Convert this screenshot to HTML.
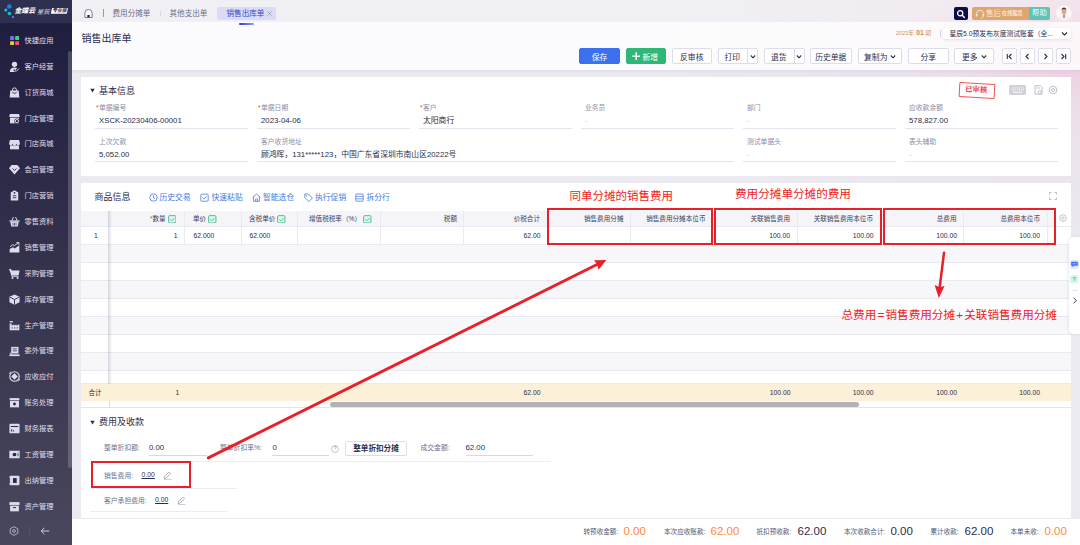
<!DOCTYPE html>
<html lang="zh-CN">
<head>
<meta charset="utf-8">
<title>销售出库单</title>
<style>
*{box-sizing:border-box;margin:0;padding:0}
html,body{width:1080px;height:545px;overflow:hidden}
body{position:relative;font-family:"Liberation Sans","Noto Sans CJK SC",sans-serif;color:#2b2c4a;background:radial-gradient(ellipse 420px 200px at 1088px 48px,rgba(238,203,222,1) 0%,rgba(238,204,222,.95) 6%,rgba(238,207,224,.5) 28%,rgba(238,210,226,.3) 45%,rgba(237,212,227,.08) 88%,rgba(236,214,228,0) 100%),#eaeaf0;font-size:8px}
.a{position:absolute}
.t{position:absolute;white-space:nowrap;line-height:1}
/* sidebar */
#side{left:0;top:0;width:72px;height:545px;background:linear-gradient(180deg,#1f1e3f 4%,#37354f 55%,#48475d 100%)}
#side .logo{left:0;top:0;width:72px;height:22.500px;background:#2f3050}
#side .sb{display:none}
#side .sbt{left:67.700px;top:51px;width:4.300px;height:416.500px;background:rgba(255,255,255,.19);border-radius:2px}
.mi{position:absolute;left:24.400px;font-size:7.250px;color:#e0dfec;white-space:nowrap;line-height:1}
.ic{position:absolute;left:8.800px;width:11px;height:11px;margin-top:-.5px}
/* header */
#tabs{left:72px;top:0;width:1008px;height:22px;background:rgba(255,255,255,.3)}
#head{left:72px;top:22px;width:1008px;height:48px;background:rgba(255,255,255,.82)}
#headsh{left:72px;top:70px;width:1008px;height:4px;background:linear-gradient(180deg,rgba(150,150,175,.13),rgba(150,150,175,0))}
.tab{font-size:7.6px;color:#6d6e86}
.btn{position:absolute;top:48px;height:16px;border:1px solid #dcdcea;border-radius:2px;background:#fff;font-size:7.8px;color:#2b2c4a;text-align:center;line-height:17.600px;white-space:nowrap;overflow:hidden}
/* panels */
.panel{position:absolute;background:#fff}
.lbl{position:absolute;font-size:6.8px;color:#8c8ea3;white-space:nowrap;line-height:1}
.val{position:absolute;font-size:7.8px;color:#2b2c4a;white-space:nowrap;line-height:1}
.ul{position:absolute;height:1px;background:#e5e5ef}

.th{position:absolute;font-size:6.6px;color:#3d3e58;white-space:nowrap;line-height:1;text-align:right}
.td{position:absolute;font-size:6.8px;color:#2b2c4a;white-space:nowrap;line-height:1;text-align:right}
.red{color:#ee1c25}
.req{color:#f0483e}
.rbox{position:absolute;border:2px solid #e8202a}
.lnk{position:absolute;font-size:7.8px;color:#4a78e0;white-space:nowrap;line-height:1}
.fl{position:absolute;font-size:6.8px;color:#6e7088;white-space:nowrap;line-height:1}
.big{position:absolute;font-size:11.5px;white-space:nowrap;line-height:1}
.or{color:#ff8a3c}
</style>
</head>
<body>
<!-- SIDEBAR -->
<div id="side" class="a">
  <div class="a logo"></div>
  <div class="a sb"></div>
  <div class="a sbt"></div>
  <svg class="a" style="left:0;top:0" width="72" height="22" viewBox="0 0 72 22"><circle cx="9.3" cy="6.5" r="2.3" fill="#1a7df5"/><circle cx="5.8" cy="10" r="1.5" fill="#10c8f0"/><circle cx="9.4" cy="13.5" r="1.8" fill="#12c4b8"/><rect x="11.9" y="16.1" width="2" height="2" fill="#9a5cf0"/><path d="M52 8.100h16l-1.200 5.600h-16z" fill="#fff"/></svg>
  <div class="t" style="left:14.400px;top:8.300px;font-size:6.900px;font-weight:bold;font-style:italic;color:#fff;letter-spacing:0">金蝶云</div>
  <div class="t" style="left:37px;top:8.500px;font-size:6.300px;font-style:italic;color:#d8d8e6">星辰</div>
  <div class="t" style="left:52.200px;top:8.600px;font-size:4.800px;font-weight:bold;font-style:italic;color:#2d2b4b">专业版</div>
  <svg class="ic" style="top:35.6px" viewBox="0 0 10 10"><rect x="1" y="1" width="3.6" height="3.6" rx=".8" fill="#7a6cf0"/><rect x="5.6" y="1" width="3.6" height="3.6" rx=".8" fill="#3fd08a"/><rect x="1" y="5.6" width="3.6" height="3.6" rx=".8" fill="#f8c63c"/><rect x="5.6" y="5.6" width="3.6" height="3.6" rx=".8" fill="#f2546a"/></svg><div class="mi" style="top:36.9px">快捷应用</div>
  <svg class="ic" style="top:61.5px" viewBox="0 0 10 10"><circle cx="5" cy="3" r="2.4" fill="#dddcec"/><path d="M.8 9.6c0-2.6 1.8-3.8 4.2-3.8 1 0 1.8.2 2.5.6L5.6 8.3l-1-.9-.8.8 1.8 1.7H.8z" fill="#dddcec"/><path d="M5.5 8.6l1 .9 2.6-2.6" stroke="#dddcec" stroke-width=".9" fill="none"/></svg><div class="mi" style="top:62.8px">客户经营</div>
  <svg class="ic" style="top:87.3px" viewBox="0 0 10 10"><path d="M1.2 3.2h7.6l.6 6.3H.6z" fill="#dddcec"/><path d="M3.2 4.6V2.6a1.8 1.8 0 013.6 0v2" stroke="#dddcec" stroke-width=".9" fill="none"/><path d="M3.2 4.4a1.8 1.4 0 003.6 0" stroke="#2a2846" stroke-width=".7" fill="none"/></svg><div class="mi" style="top:88.6px">订货商城</div>
  <svg class="ic" style="top:113.2px" viewBox="0 0 10 10"><path d="M.8 1h8.4l.6 2.6H.2z" fill="#dddcec"/><path d="M.9 4.2h8.2v5.2H.9z" fill="#dddcec"/><circle cx="7.2" cy="7.4" r="2.3" fill="#2a2846"/><circle cx="7.2" cy="7.4" r="1.5" fill="none" stroke="#dddcec" stroke-width=".9"/></svg><div class="mi" style="top:114.5px">门店管理</div>
  <svg class="ic" style="top:139.1px" viewBox="0 0 10 10"><path d="M.8 1h8.4l.7 3a1.6 1.6 0 01-3.2.2 1.7 1.7 0 01-3.4 0A1.6 1.6 0 01.1 4z" fill="#dddcec"/><path d="M.9 5.8h8.2v3.6H.9z" fill="#dddcec"/></svg><div class="mi" style="top:140.4px">门店商城</div>
  <svg class="ic" style="top:164.9px" viewBox="0 0 10 10"><path d="M2.4 1h5.2L10 3.8 5 9.6 0 3.8z" fill="#dddcec"/><path d="M3.2 4l1.8 2 1.8-2" stroke="#2a2846" stroke-width=".8" fill="none"/></svg><div class="mi" style="top:166.3px">会员管理</div>
  <svg class="ic" style="top:190.8px" viewBox="0 0 10 10"><path d="M1.6 2.2L5 .2l3.4 2v7.4H1.6z" fill="#dddcec"/><circle cx="5" cy="2.6" r=".8" fill="#2a2846"/><path d="M3.4 5.2h3.2M3.4 7h3.2" stroke="#2a2846" stroke-width=".8"/></svg><div class="mi" style="top:192.1px">门店营销</div>
  <svg class="ic" style="top:216.7px" viewBox="0 0 10 10"><path d="M.4 4h9.2v1.2H.4z" fill="#dddcec"/><path d="M1.2 5.2h7.6l-.8 4.4H2z" fill="#dddcec"/><path d="M2.6 4.2L4 1M7.4 4.2L6 1" stroke="#dddcec" stroke-width=".9"/><path d="M3.6 6.2v2.4M5 6.2v2.4M6.4 6.2v2.4" stroke="#2a2846" stroke-width=".6"/></svg><div class="mi" style="top:218.0px">零售资料</div>
  <svg class="ic" style="top:242.6px" viewBox="0 0 10 10"><path d="M.6 9.6V6.4l3-1.6 1.6 1L9.4 3v6.6z" fill="#dddcec"/><path d="M1 4.2l2.6-1.8 1.4.9L8.6.6" stroke="#dddcec" stroke-width=".9" fill="none"/><path d="M6.8.4h2.2v2.2" stroke="#dddcec" stroke-width=".9" fill="none"/></svg><div class="mi" style="top:243.9px">销售管理</div>
  <svg class="ic" style="top:268.4px" viewBox="0 0 10 10"><path d="M0 .8h1.6l.5 1.4h7.5l-.9 4.6H2.3z" fill="#dddcec"/><path d="M1.6 1l1 6.6h6" stroke="#dddcec" stroke-width=".8" fill="none"/><circle cx="3.2" cy="9" r=".9" fill="#dddcec"/><circle cx="7.8" cy="9" r=".9" fill="#dddcec"/></svg><div class="mi" style="top:269.7px">采购管理</div>
  <svg class="ic" style="top:294.3px" viewBox="0 0 10 10"><path d="M5 .4l4.6 2.2v4.8L5 9.8.4 7.4V2.6z" fill="#dddcec"/><path d="M.8 2.9L5 5l4.2-2.1M5 5v4.4" stroke="#2a2846" stroke-width=".8" fill="none"/></svg><div class="mi" style="top:295.6px">库存管理</div>
  <svg class="ic" style="top:320.2px" viewBox="0 0 10 10"><path d="M.6 9.4V3.2h1.8v2l2.2-1.4v1.4l2.2-1.4v1.4L9.4 3.8v5.6z" fill="#dddcec"/><path d="M.6 1h3v1.2h-3z" fill="#dddcec"/><path d="M2.2 7.2h1.2M4.6 7.2h1.2M7 7.2h1.2" stroke="#2a2846" stroke-width=".8"/></svg><div class="mi" style="top:321.5px">生产管理</div>
  <svg class="ic" style="top:346.0px" viewBox="0 0 10 10"><path d="M2 .8h6.6v6H2z" fill="#dddcec"/><path d="M3.4 2.6h3.8M3.4 4.4h3.8" stroke="#2a2846" stroke-width=".7"/><path d="M.4 7.6h9.2v1.6H.4z" fill="#dddcec"/><path d="M1 6.2l1.4 1.4" stroke="#dddcec" stroke-width="1"/></svg><div class="mi" style="top:347.3px">委外管理</div>
  <svg class="ic" style="top:371.9px" viewBox="0 0 10 10"><circle cx="5" cy="5" r="4.3" fill="none" stroke="#dddcec" stroke-width="1"/><path d="M5 2l3 3-3 3-3-3z" fill="#dddcec"/><path d="M0 2.6L1.8.6M10 7.4L8.2 9.4" stroke="#dddcec" stroke-width=".9"/></svg><div class="mi" style="top:373.2px">应收应付</div>
  <svg class="ic" style="top:397.8px" viewBox="0 0 10 10"><path d="M.6 1h8.8v2H.6z" fill="#dddcec"/><path d="M.9 3.6h8.2v5.8H.9z" fill="#dddcec"/><circle cx="5" cy="6.4" r="1.3" fill="#2a2846"/></svg><div class="mi" style="top:399.1px">账务处理</div>
  <svg class="ic" style="top:423.7px" viewBox="0 0 10 10"><path d="M1.2.6h7.6a.8.8 0 01.8.8v7.2a.8.8 0 01-.8.8H1.2a.8.8 0 01-.8-.8V1.400a.8.8 0 01.8-.8z" fill="#dddcec"/><path d="M1.6 3.200h6.800" stroke="#2a2846" stroke-width=".9"/><path d="M2.4 7.8V5.600M4 7.8V6.400" stroke="#2a2846" stroke-width=".8"/></svg><div class="mi" style="top:425.0px">财务报表</div>
  <svg class="ic" style="top:449.5px" viewBox="0 0 10 10"><path d="M.3 1.6h9.4v6.8H.3z" fill="#dddcec"/><circle cx="5" cy="5" r="1.7" fill="#2a2846"/><path d="M8.2 3.400v3.2" stroke="#2a2846" stroke-width=".7"/></svg><div class="mi" style="top:450.8px">工资管理</div>
  <svg class="ic" style="top:475.4px" viewBox="0 0 10 10"><path d="M1.4.6h7.200a.9.9 0 01.9.9v7a.9.9 0 01-.9.9H1.4a.9.9 0 01-.9-.9v-7a.9.9 0 01.9-.9z" fill="#dddcec"/><path d="M3.600 2.800h3.400v4.400H3.600z" fill="#2a2846"/><path d="M.5 2.600v4.800" stroke="#2a2846" stroke-width="1.400"/><path d="M1.2 1.800v6.400" stroke="#dddcec" stroke-width="1"/></svg><div class="mi" style="top:476.7px">出纳管理</div>
  <svg class="ic" style="top:501.3px" viewBox="0 0 10 10"><path d="M.4 1h9.200v2.600H.4z" fill="#dddcec"/><path d="M1 4.200h8v5.200H1z" fill="#dddcec"/><path d="M3.600 6h2.800" stroke="#2a2846" stroke-width=".9"/></svg><div class="mi" style="top:502.6px">资产管理</div>
  <svg class="a" style="left:8.500px;top:526px" width="10" height="10" viewBox="0 0 10 10"><path d="M5 .6l3.800 2.200v4.400L5 9.400 1.200 7.200V2.800z" fill="none" stroke="#b9b8cc" stroke-width=".9"/><circle cx="5" cy="5" r="1.400" fill="none" stroke="#b9b8cc" stroke-width=".9"/></svg>
  <div class="a" style="left:29px;top:527px;width:1px;height:8px;background:#55536f"></div>
  <svg class="a" style="left:40px;top:526px" width="10" height="10" viewBox="0 0 10 10"><path d="M9.200 5H1.200M4.400 1.800L1.200 5l3.200 3.200" fill="none" stroke="#d0cfe0" stroke-width="1"/></svg>
</div>
<!-- HEADER -->
<div id="tabs" class="a"></div>
<div id="head" class="a"></div>
<div id="headsh" class="a"></div>
<!-- tabs -->
<svg class="a" style="left:84.400px;top:8.500px" width="9" height="9" viewBox="0 0 9 9"><path d="M.9 8.500V4A3.600 3.600 0 018.100 4V8.500z" fill="#fcfcfe" stroke="#55566e" stroke-width=".75"/><rect x="3.400" y="6" width="2.200" height="2.300" fill="#17184e"/></svg>
<div class="a" style="left:103px;top:9px;width:1px;height:8px;background:#7c9cf0"></div>
<div class="t tab" style="left:112.500px;top:10.200px">费用分摊单</div>
<div class="a" style="left:160px;top:10.500px;width:1px;height:5px;background:#d9d9e4"></div>
<div class="t tab" style="left:169.500px;top:10.200px">其他支出单</div>
<div class="a" style="left:217px;top:6.800px;width:59px;height:13.200px;background:#d9dcf4;border-radius:2px"></div>
<div class="t tab" style="left:226.500px;top:10.200px;color:#3d46c8">销售出库单</div>
<svg class="a" style="left:266.800px;top:11.300px" width="5" height="5" viewBox="0 0 5 5"><path d="M.5 .5l4 4M4.500 .5l-4 4" stroke="#8d8fa8" stroke-width=".7"/></svg>
<div class="a" style="left:239px;top:23px;width:15px;height:1.700px;background:linear-gradient(90deg,#3a2ff0,#7ea6ff);border-radius:1px"></div>
<!-- title -->
<div class="t" style="left:81.500px;top:33.500px;font-size:10px;color:#2b2c4a">销售出库单</div>
<!-- top right -->
<div class="a" style="left:954px;top:6.700px;width:13.500px;height:13.500px;background:#0e0c48;border-radius:2px"></div>
<svg class="a" style="left:954px;top:6.700px" width="13.500" height="13.500" viewBox="0 0 13.500 13.500"><circle cx="6.200" cy="6.200" r="2.600" fill="none" stroke="#fff" stroke-width="1.300"/><path d="M8.200 8.200l2.200 2.200" stroke="#fff" stroke-width="1.400" stroke-linecap="round"/></svg>
<div class="a" style="left:972px;top:6.700px;width:56.500px;height:13.500px;background:#dca670;border-radius:2px 0 0 2px"></div>
<div class="a" style="left:1028.500px;top:6.700px;width:21.500px;height:13.500px;background:#5cc5b8;border-radius:0 2px 2px 0"></div>
<svg class="a" style="left:975px;top:8.500px" width="10" height="10" viewBox="0 0 10 10"><path d="M1.600 6V4.600a3.400 3.400 0 016.800 0V6" fill="none" stroke="#f7e6d2" stroke-width="1"/><rect x=".8" y="4.800" width="1.800" height="2.800" rx=".8" fill="#f7e6d2"/><rect x="7.400" y="4.800" width="1.800" height="2.800" rx=".8" fill="#f7e6d2"/><path d="M8.300 7.400c0 1.400-1.200 1.800-2.800 1.800" fill="none" stroke="#f7e6d2" stroke-width=".8"/></svg>
<div class="t" style="left:986px;top:9.500px;font-size:7.600px;color:#f7e9d8">售后</div>
<div class="t" style="left:1002px;top:11px;font-size:5.200px;color:#f7e9d8;font-weight:bold">在线服务</div>
<div class="t" style="left:1032px;top:9.400px;font-size:7.400px;color:#e9fbf8">帮助</div>
<svg class="a" style="left:1056px;top:5px" width="16" height="16" viewBox="0 0 16 16"><defs><clipPath id="av"><circle cx="8" cy="8" r="7.800"/></clipPath></defs><circle cx="8" cy="8" r="7.800" fill="#fbf6f8"/><g clip-path="url(#av)"><ellipse cx="8" cy="15.500" rx="6" ry="5.500" fill="#f3eef2"/><path d="M6.800 9.500h2.400l-.5 3.500h-1.400z" fill="#c98b7a"/><ellipse cx="8" cy="6.400" rx="2.300" ry="2.900" fill="#e0a48c"/><path d="M5.600 5.600c0-2.400 1.200-3.200 2.400-3.200s2.400.8 2.400 3.200c-.6-1.200-1.400-1.600-2.400-1.600s-1.800.4-2.400 1.600z" fill="#2c2424"/></g></svg>
<div class="t" style="left:895.700px;top:30.600px;font-size:5.600px;color:#d4935c">2023年</div>
<div class="t" style="left:916.300px;top:29.900px;font-size:6.800px;font-weight:bold;color:#d9853e">01</div>
<div class="t" style="left:925.500px;top:30.600px;font-size:5.600px;color:#d4935c">期</div>
<div class="a" style="left:940px;top:30px;width:1px;height:7px;background:#d6d6e2"></div>
<div class="a" style="left:943px;top:28px;width:128px;height:11px;background:#fff;border-radius:2px;box-shadow:0 1px 3px rgba(120,110,160,.18)"></div>
<div class="t" style="left:949.500px;top:30.500px;font-size:6.800px;color:#2b2c4a">星辰5.0预发布灰度测试账套（全...</div>
<svg class="a" style="left:1060.500px;top:30.500px" width="7" height="6" viewBox="0 0 7 6"><path d="M1 1.500l2.500 2.500L6 1.500" fill="none" stroke="#2b2c4a" stroke-width="1.200"/></svg>
<!-- toolbar -->
<div class="btn" style="left:579px;width:41px;background:#3c70ee;border-color:#3c70ee;color:#fff">保存</div>
<div class="btn" style="left:625.500px;width:40.500px;background:#2fb777;border-color:#2fb777;color:#fff;padding-left:9px">新增</div>
<svg class="a" style="left:631.500px;top:51.800px" width="8.500" height="8.500" viewBox="0 0 8 8"><path d="M4 .3v7.400M.3 4h7.400" stroke="#fff" stroke-width="1.400"/></svg>
<div class="btn" style="left:671.500px;width:40.500px">反审核</div>
<div class="btn" style="left:717.500px;width:40.500px;padding-right:11px">打印</div>
<div class="a" style="left:747px;top:49px;width:1px;height:14px;background:#dcdcea"></div>
<svg class="a ch" style="left:749.500px;top:53.800px" width="6" height="6" viewBox="0 0 6 6"><path d="M.8 1.500L3 3.800 5.200 1.500" fill="none" stroke="#2b2c4a" stroke-width="1.100"/></svg>
<div class="btn" style="left:764px;width:40.500px;padding-right:11px">退货</div>
<div class="a" style="left:793.500px;top:49px;width:1px;height:14px;background:#dcdcea"></div>
<svg class="a ch" style="left:796px;top:53.800px" width="6" height="6" viewBox="0 0 6 6"><path d="M.8 1.500L3 3.800 5.200 1.500" fill="none" stroke="#2b2c4a" stroke-width="1.100"/></svg>
<div class="btn" style="left:810px;width:41.500px">历史单据</div>
<div class="btn" style="left:857.500px;width:44.500px;padding-right:8px">复制为</div>
<svg class="a ch" style="left:889.500px;top:53.800px" width="6" height="6" viewBox="0 0 6 6"><path d="M.8 1.500L3 3.800 5.200 1.500" fill="none" stroke="#2b2c4a" stroke-width="1.100"/></svg>
<div class="btn" style="left:908px;width:40.500px">分享</div>
<div class="btn" style="left:954.200px;width:40.300px;padding-right:9px">更多</div>
<svg class="a ch" style="left:980.500px;top:53.800px" width="6" height="6" viewBox="0 0 6 6"><path d="M.8 1.500L3 3.800 5.200 1.500" fill="none" stroke="#2b2c4a" stroke-width="1.100"/></svg>
<div class="btn" style="left:1001.500px;width:15px"></div>
<svg class="a" style="left:1005.500px;top:52.500px" width="7" height="7" viewBox="0 0 7 7"><path d="M1.300 1v5M5.500 1L3 3.500 5.500 6" fill="none" stroke="#2b2c4a" stroke-width="1.100"/></svg>
<div class="btn" style="left:1019.500px;width:15px"></div>
<svg class="a" style="left:1023.500px;top:52.500px" width="7" height="7" viewBox="0 0 7 7"><path d="M4.500 1L2 3.500 4.500 6" fill="none" stroke="#2b2c4a" stroke-width="1.100"/></svg>
<div class="btn" style="left:1037.500px;width:15px"></div>
<svg class="a" style="left:1041.500px;top:52.500px" width="7" height="7" viewBox="0 0 7 7"><path d="M2.500 1L5 3.500 2.500 6" fill="none" stroke="#2b2c4a" stroke-width="1.100"/></svg>
<div class="btn" style="left:1055.500px;width:15px"></div>
<svg class="a" style="left:1059.500px;top:52.500px" width="7" height="7" viewBox="0 0 7 7"><path d="M5.700 1v5M1.500 1L4 3.500 1.500 6" fill="none" stroke="#2b2c4a" stroke-width="1.100"/></svg>
<!-- PANELS -->
<div class="panel" id="p1" style="left:81px;top:77px;width:990px;height:99px"></div>
<!-- panel1 content -->
<svg class="a" style="left:89.800px;top:87.600px" width="5" height="5" viewBox="0 0 5 5"><path d="M.3 .8h4.400L2.500 4.500z" fill="#2b2c4a"/></svg>
<div class="t" style="left:99px;top:86.500px;font-size:9px;color:#2b2c4a">基本信息</div>
<div class="lbl req" style="left:96.0px;top:104.8px">*</div><div class="lbl" style="left:99.0px;top:105.3px">单据编号</div><div class="val" style="left:99.0px;top:116.6px">XSCK-20230406-00001</div><div class="ul" style="left:94.5px;top:128px;width:153px"></div>
<div class="lbl req" style="left:258.0px;top:104.8px">*</div><div class="lbl" style="left:261.0px;top:105.3px">单据日期</div><div class="val" style="left:261.0px;top:116.6px">2023-04-06</div><div class="ul" style="left:256.5px;top:128px;width:153px"></div>
<div class="lbl req" style="left:420.0px;top:104.8px">*</div><div class="lbl" style="left:423.0px;top:105.3px">客户</div><div class="val" style="left:423.0px;top:116.6px">太阳商行</div><div class="ul" style="left:418.5px;top:128px;width:153px"></div>
<div class="lbl" style="left:585.0px;top:105.3px">业务员</div><div class="val" style="left:585.0px;top:116.6px;color:#c2c3d2">-</div><div class="ul" style="left:580.5px;top:128px;width:153px"></div>
<div class="lbl" style="left:747.0px;top:105.3px">部门</div><div class="val" style="left:747.0px;top:116.6px;color:#c2c3d2">-</div><div class="ul" style="left:742.5px;top:128px;width:153px"></div>
<div class="lbl" style="left:909.0px;top:105.3px">应收款余额</div><div class="val" style="left:909.0px;top:116.6px">578,827.00</div><div class="ul" style="left:904.5px;top:128px;width:153px"></div>
<div class="lbl" style="left:99.0px;top:139.3px">上次欠款</div><div class="val" style="left:99.0px;top:150.700px">5,052.00</div><div class="ul" style="left:94.5px;top:160.500px;width:153px"></div>
<div class="lbl" style="left:261.0px;top:139.3px">客户收货地址</div><div class="val" style="left:261.0px;top:150.700px">顾鸿晖，131*****123，中国广东省深圳市南山区20222号</div><div class="ul" style="left:256.5px;top:160.500px;width:477px"></div>
<div class="lbl" style="left:747.0px;top:139.3px">测试单据头</div><div class="val" style="left:747.0px;top:150.700px;color:#c2c3d2">-</div><div class="ul" style="left:742.5px;top:160.500px;width:153px"></div>
<div class="lbl" style="left:909.0px;top:139.3px">表头辅助</div><div class="val" style="left:909.0px;top:150.700px;color:#c2c3d2">-</div><div class="ul" style="left:904.5px;top:160.500px;width:153px"></div>
<div class="a" style="left:958.500px;top:82.500px;width:36px;height:15px;border:1px solid #f0555a;transform:rotate(3deg);border-radius:1px"></div>
<div class="t" style="left:965px;top:85.500px;font-size:7.400px;font-weight:bold;color:#ee3a40;font-family:'Liberation Serif','Noto Serif CJK SC',serif;transform:rotate(3deg);-webkit-text-stroke:.12px #ee3a40">已审核</div>
<svg class="a" style="left:1009px;top:85px" width="17" height="10" viewBox="0 0 17 10"><rect x=".5" y=".5" width="16" height="9" rx="1" fill="#d0d0d8" stroke="#c2c2cc" stroke-width=".6"/><path d="M2 3h13M2 5h13" stroke="#fff" stroke-width=".8" stroke-dasharray="1.200 .8"/><path d="M4 7.300h9" stroke="#fff" stroke-width=".9"/></svg>
<svg class="a" style="left:1033.500px;top:85px" width="9" height="10" viewBox="0 0 9 10"><path d="M1 .8h5.500l1.500 1.500V9.200H1z" fill="none" stroke="#b4b5c4" stroke-width=".9"/><path d="M2.500 3h3.500" stroke="#b4b5c4" stroke-width=".8"/><circle cx="5.800" cy="7" r="1.500" fill="#fff" stroke="#b4b5c4" stroke-width=".8"/></svg>
<svg class="a" style="left:1048px;top:85px" width="10" height="10" viewBox="0 0 10 10"><circle cx="5" cy="5" r="3.800" fill="none" stroke="#b4b5c4" stroke-width=".9"/><circle cx="5" cy="5" r="1.500" fill="none" stroke="#b4b5c4" stroke-width=".8"/></svg>
<div class="panel" id="p2" style="left:81px;top:183px;width:990px;height:224px"></div>
<!-- panel2 content -->
<div class="t" style="left:94.500px;top:193px;font-size:9px;color:#2b2c4a">商品信息</div>
<svg class="a" style="left:148.5px;top:192.500px" width="9" height="9" viewBox="0 0 9 9"><circle cx="4.500" cy="4.500" r="3.700" fill="none" stroke="#4a78e0" stroke-width=".8"/><path d="M4.500 2.300v2.400l1.500 1" fill="none" stroke="#4a78e0" stroke-width=".8"/></svg><div class="lnk" style="left:159.5px;top:194.300px">历史交易</div>
<svg class="a" style="left:200px;top:192.500px" width="9" height="9" viewBox="0 0 9 9"><rect x=".8" y="1.200" width="7.400" height="7" rx=".8" fill="none" stroke="#4a78e0" stroke-width=".8"/><path d="M2.600 4.600l1.500 1.500 2.600-2.800" fill="none" stroke="#4a78e0" stroke-width=".8"/></svg><div class="lnk" style="left:211.5px;top:194.300px">快速粘贴</div>
<svg class="a" style="left:251.5px;top:192.500px" width="9" height="9" viewBox="0 0 9 9"><path d="M.6 4.400L4.500 1l3.900 3.400M1.600 3.800V8.300h5.800V3.800" fill="none" stroke="#4a78e0" stroke-width=".8"/><path d="M3.600 8.300V6h1.800v2.300" fill="none" stroke="#4a78e0" stroke-width=".7"/></svg><div class="lnk" style="left:263px;top:194.300px">智能选仓</div>
<svg class="a" style="left:303.5px;top:192.500px" width="9" height="9" viewBox="0 0 9 9"><path d="M.8 1h3.600l4 4-3.600 3.600-4-4z" fill="none" stroke="#4a78e0" stroke-width=".8"/><circle cx="2.600" cy="2.800" r=".6" fill="#4a78e0"/></svg><div class="lnk" style="left:315px;top:194.300px">执行促销</div>
<svg class="a" style="left:355px;top:192.500px" width="9" height="9" viewBox="0 0 9 9"><rect x=".8" y="1" width="7.400" height="7.200" rx=".6" fill="none" stroke="#4a78e0" stroke-width=".8"/><path d="M.8 3.400h7.400M.8 5.800h7.400" stroke="#4a78e0" stroke-width=".7"/></svg><div class="lnk" style="left:366.5px;top:194.300px">拆分行</div>
<svg class="a" style="left:1049px;top:192px" width="8" height="8" viewBox="0 0 8 8"><path d="M.5 2.500V.5h2M5.500 .5h2v2M7.500 5.500v2h-2M2.500 7.500h-2v-2" fill="none" stroke="#a9abbd" stroke-width=".8"/></svg>
<div class="a" style="left:81px;top:210.500px;width:974px;height:16px;background:#f4f4f9"></div>
<div class="a" style="left:81px;top:226.5px;width:990px;height:18.5px;background:#fff;border-bottom:1px solid #e9e9f1"></div>
<div class="a" style="left:81px;top:245px;width:990px;height:18px;background:#f7f7fa;border-bottom:1px solid #e9e9f1"></div>
<div class="a" style="left:81px;top:263px;width:990px;height:18px;background:#fff;border-bottom:1px solid #e9e9f1"></div>
<div class="a" style="left:81px;top:281px;width:990px;height:18px;background:#f7f7fa;border-bottom:1px solid #e9e9f1"></div>
<div class="a" style="left:81px;top:299px;width:990px;height:18px;background:#fff;border-bottom:1px solid #e9e9f1"></div>
<div class="a" style="left:81px;top:317px;width:990px;height:18px;background:#f7f7fa;border-bottom:1px solid #e9e9f1"></div>
<div class="a" style="left:81px;top:335px;width:990px;height:18px;background:#fff;border-bottom:1px solid #e9e9f1"></div>
<div class="a" style="left:81px;top:353px;width:990px;height:18px;background:#f7f7fa;border-bottom:1px solid #e9e9f1"></div>
<div class="a" style="left:81px;top:371px;width:990px;height:12.5px;background:#fff;border-bottom:1px solid #e9e9f1"></div>
<div class="a" style="left:81px;top:226px;width:990px;height:1px;background:#e9e9f1"></div>
<div class="a" style="left:184.0px;top:210.500px;width:1px;height:34.500px;background:#e9e9f1"></div>
<div class="a" style="left:240.5px;top:210.500px;width:1px;height:34.500px;background:#e9e9f1"></div>
<div class="a" style="left:297.0px;top:210.500px;width:1px;height:34.500px;background:#e9e9f1"></div>
<div class="a" style="left:380.0px;top:210.500px;width:1px;height:34.500px;background:#e9e9f1"></div>
<div class="a" style="left:463.0px;top:210.500px;width:1px;height:34.500px;background:#e9e9f1"></div>
<div class="a" style="left:546.5px;top:210.500px;width:1px;height:34.500px;background:#e9e9f1"></div>
<div class="a" style="left:629.5px;top:210.500px;width:1px;height:34.500px;background:#e9e9f1"></div>
<div class="a" style="left:713.0px;top:210.500px;width:1px;height:34.500px;background:#e9e9f1"></div>
<div class="a" style="left:796.5px;top:210.500px;width:1px;height:34.500px;background:#e9e9f1"></div>
<div class="a" style="left:879.5px;top:210.500px;width:1px;height:34.500px;background:#e9e9f1"></div>
<div class="a" style="left:963.0px;top:210.500px;width:1px;height:34.500px;background:#e9e9f1"></div>
<div class="a" style="left:1046.5px;top:210.500px;width:1px;height:34.500px;background:#e9e9f1"></div>
<div class="a" style="left:1054.5px;top:210.500px;width:1px;height:34.500px;background:#e9e9f1"></div>
<div class="a" style="left:108px;top:210.500px;width:4px;height:190.500px;background:linear-gradient(90deg,rgba(120,120,150,.28),rgba(120,120,150,0))"></div>
<div class="a" style="left:81px;top:383.500px;width:990px;height:17.500px;background:#fdf0d8"></div>
<div class="th req" style="left:150.0px;top:215.500px">*</div><div class="th" style="left:152.5px;top:216px">数量<span style="display:inline-block;width:9.500px;height:6px;margin-left:2px;vertical-align:top;position:relative"><svg style="position:absolute;left:0;top:-1.400px;width:8.600px;height:8.600px" viewBox="0 0 8 8"><rect x=".6" y=".6" width="6.800" height="6.800" rx="1" fill="#e4f6ee" stroke="#3fbf8f" stroke-width=".9"/><path d="M2.200 4l1.400 1.400 2.400-2.600" fill="none" stroke="#3fbf8f" stroke-width=".8"/></svg></span></div>
<div class="th" style="left:193px;top:216px">单价<span style="display:inline-block;width:9.500px;height:6px;margin-left:2px;vertical-align:top;position:relative"><svg style="position:absolute;left:0;top:-1.400px;width:8.600px;height:8.600px" viewBox="0 0 8 8"><rect x=".6" y=".6" width="6.800" height="6.800" rx="1" fill="#e4f6ee" stroke="#3fbf8f" stroke-width=".9"/><path d="M2.200 4l1.400 1.400 2.400-2.600" fill="none" stroke="#3fbf8f" stroke-width=".8"/></svg></span></div>
<div class="th" style="left:249px;top:216px">含税单价<span style="display:inline-block;width:9.500px;height:6px;margin-left:2px;vertical-align:top;position:relative"><svg style="position:absolute;left:0;top:-1.400px;width:8.600px;height:8.600px" viewBox="0 0 8 8"><rect x=".6" y=".6" width="6.800" height="6.800" rx="1" fill="#e4f6ee" stroke="#3fbf8f" stroke-width=".9"/><path d="M2.200 4l1.400 1.400 2.400-2.600" fill="none" stroke="#3fbf8f" stroke-width=".8"/></svg></span></div>
<div class="th" style="left:309px;top:216px">增值税税率（%）<span style="display:inline-block;width:9.500px;height:6px;margin-left:2px;vertical-align:top;position:relative"><svg style="position:absolute;left:0;top:-1.400px;width:8.600px;height:8.600px" viewBox="0 0 8 8"><rect x=".6" y=".6" width="6.800" height="6.800" rx="1" fill="#e4f6ee" stroke="#3fbf8f" stroke-width=".9"/><path d="M2.200 4l1.400 1.400 2.400-2.600" fill="none" stroke="#3fbf8f" stroke-width=".8"/></svg></span></div>
<div class="th" style="right:623px;top:216px">税额</div>
<div class="th" style="right:540px;top:216px">价税合计</div>
<div class="th" style="right:456.5px;top:216px">销售费用分摊</div>
<div class="th" style="right:374.5px;top:216px">销售费用分摊本位币</div>
<div class="th" style="right:290px;top:216px">关联销售费用</div>
<div class="th" style="right:207px;top:216px">关联销售费用本位币</div>
<div class="th" style="right:123.5px;top:216px">总费用</div>
<div class="th" style="right:40px;top:216px">总费用本位币</div>
<svg class="a" style="left:1058.500px;top:214px" width="8" height="8" viewBox="0 0 8 8"><circle cx="4" cy="4" r="3.300" fill="none" stroke="#b4b5c4" stroke-width=".8"/><circle cx="4" cy="4" r="1.200" fill="none" stroke="#b4b5c4" stroke-width=".7"/></svg>
<div class="td" style="left:94px;top:232.700px">1</div>
<div class="td" style="right:902.5px;top:232.700px">1</div>
<div class="td" style="left:193.5px;top:232.700px">62.000</div>
<div class="td" style="left:249.5px;top:232.700px">62.000</div>
<div class="td" style="right:539.5px;top:232.700px">62.00</div>
<div class="td" style="right:290px;top:232.700px">100.00</div>
<div class="td" style="right:206.5px;top:232.700px">100.00</div>
<div class="td" style="right:123px;top:232.700px">100.00</div>
<div class="td" style="right:40px;top:232.700px">100.00</div>
<div class="td" style="left:88.500px;top:389.800px;font-size:6.500px">合计</div>
<div class="td" style="left:175.5px;top:389.800px">1</div>
<div class="td" style="right:539.5px;top:389.800px">62.00</div>
<div class="td" style="right:289.5px;top:389.800px">100.00</div>
<div class="td" style="right:206.5px;top:389.800px">100.00</div>
<div class="td" style="right:123px;top:389.800px">100.00</div>
<div class="td" style="right:40px;top:389.800px">100.00</div>
<div class="a" style="left:81px;top:401px;width:990px;height:6px;background:#fff"></div>
<div class="a" style="left:330px;top:401.500px;width:528.500px;height:5px;background:#b2b2b6;border-radius:2.500px"></div>
<div class="a" style="left:81px;top:406.500px;width:990px;height:1px;background:#e4e4ec"></div>
<div class="a" style="left:108.500px;top:401px;width:1px;height:6px;background:#dcdce6"></div>
<div class="panel" id="p3" style="left:81px;top:408px;width:990px;height:110px"></div>
<!-- panel3 content -->
<svg class="a" style="left:90.300px;top:419.500px" width="5" height="5" viewBox="0 0 5 5"><path d="M.3 .8h4.400L2.500 4.500z" fill="#2b2c4a"/></svg>
<div class="t" style="left:99px;top:418px;font-size:9px;color:#2b2c4a">费用及收款</div>
<div class="fl" style="left:104px;top:445px">整单折扣额:</div>
<div class="val" style="left:149px;top:444.200px">0.00</div>
<div class="ul" style="left:149px;top:455px;width:58px;background:#d8d8e4"></div>
<div class="fl" style="left:220px;top:445px">整单折扣率%:</div>
<div class="val" style="left:272.500px;top:444.200px">0</div>
<div class="ul" style="left:272px;top:455px;width:56.500px;background:#d8d8e4"></div>
<svg class="a" style="left:331px;top:444.500px" width="8" height="8" viewBox="0 0 8 8"><circle cx="4" cy="4" r="3.400" fill="none" stroke="#a9abbd" stroke-width=".7"/></svg><div class="t" style="left:333.400px;top:446px;font-size:5.500px;color:#9a9cb0">?</div>
<div class="a" style="left:345px;top:440.500px;width:62px;height:15.500px;border:1px solid #dcdcea;border-radius:2px;background:#fff;font-size:7.600px;font-weight:bold;color:#2b2c4a;text-align:center;line-height:14.800px;white-space:nowrap">整单折扣分摊</div>
<div class="fl" style="left:420.500px;top:445px">成交金额:</div>
<div class="val" style="left:465.500px;top:444.200px">62.00</div>
<div class="ul" style="left:465.500px;top:455px;width:67.500px;background:#d8d8e4"></div>
<div class="ul" style="left:91px;top:460.800px;width:460px;background:#ececf3"></div>
<div class="fl" style="left:104px;top:472.500px">销售费用:</div>
<div class="val" style="left:141.500px;top:472.200px;font-size:6.800px;text-decoration:underline">0.00</div>
<svg class="a" style="left:163px;top:470.800px" width="9.500" height="9.500" viewBox="0 0 9.500 9.500"><path d="M1 7.600l.5-2L6 1.100l1.500 1.500L3 7.100z" fill="none" stroke="#9a9cb0" stroke-width=".8"/><path d="M1 8.800h7.500" stroke="#9a9cb0" stroke-width=".7"/></svg>
<div class="ul" style="left:90px;top:488px;width:147px;background:#ececf3"></div>
<div class="fl" style="left:104px;top:497.500px">客户承担费用:</div>
<div class="val" style="left:155px;top:497.200px;font-size:6.800px;text-decoration:underline">0.00</div>
<svg class="a" style="left:176.500px;top:495.800px" width="9.500" height="9.500" viewBox="0 0 9.500 9.500"><path d="M1 7.600l.5-2L6 1.100l1.500 1.500L3 7.100z" fill="none" stroke="#9a9cb0" stroke-width=".8"/><path d="M1 8.800h7.500" stroke="#9a9cb0" stroke-width=".7"/></svg>
<div class="ul" style="left:90px;top:511px;width:137.500px;background:#ececf3"></div>
<div class="panel" id="bot" style="left:72px;top:518px;width:1008px;height:27px;border-top:1px solid #ececf2"></div>
<div class="fl" style="left:583.5px;top:528.800px;color:#55576f;font-size:6.600px">转预收金额:</div>
<div class="big or" style="left:623.5px;top:526.200px">0.00</div>
<div class="fl" style="left:664px;top:528.800px;color:#55576f;font-size:6.600px">本次应收账款:</div>
<div class="big or" style="left:710.5px;top:526.200px">62.00</div>
<div class="fl" style="left:756.5px;top:528.800px;color:#55576f;font-size:6.600px">抵扣预收款:</div>
<div class="big " style="left:797.5px;top:526.200px">62.00</div>
<div class="fl" style="left:844px;top:528.800px;color:#55576f;font-size:6.600px">本次收款合计:</div>
<div class="big " style="left:890.5px;top:526.200px">0.00</div>
<div class="fl" style="left:930.5px;top:528.800px;color:#55576f;font-size:6.600px">累计收款:</div>
<div class="big " style="left:964.5px;top:526.200px">62.00</div>
<div class="fl" style="left:1010.5px;top:528.800px;color:#55576f;font-size:6.600px">本单未收:</div>
<div class="big or" style="left:1044.5px;top:526.200px">0.00</div>
<div class="a" style="left:1068.500px;top:237px;width:14px;height:97px;background:#fff;border-radius:5px 0 0 5px;box-shadow:-1px 0 3px rgba(90,90,130,.12)"></div>
<svg class="a" style="left:1069.500px;top:259.500px" width="9" height="9" viewBox="0 0 9 9"><rect x="0" y="0" width="9" height="9" rx="2" fill="#dde7fb"/><path d="M1.200 1.800h6.600v4h-3.600l-1.600 1.500v-1.500h-1.400z" fill="#3f74ee"/><path d="M2.600 3.800h3.800" stroke="#fff" stroke-width=".8" stroke-dasharray=".8 .7"/></svg>
<svg class="a" style="left:1069.800px;top:275px" width="8.500" height="8.500" viewBox="0 0 8.500 8.500"><rect x=".2" y=".2" width="8.100" height="8.100" rx="1.600" fill="#d4f3ee"/></svg><div class="t" style="left:1072.300px;top:276.300px;font-size:6.200px;font-weight:bold;color:#35bba8">?</div>
<div class="a" style="left:1071.500px;top:290.300px;width:6px;height:1px;background:#e4e4ec"></div>
<svg class="a" style="left:1072px;top:296.500px" width="6" height="7" viewBox="0 0 6 7"><path d="M1.500 .8L4.500 3.500 1.500 6.200" fill="none" stroke="#4b4d68" stroke-width="1"/></svg>
<!-- annotations -->
<div class="rbox" style="left:546.500px;top:207.500px;width:166.500px;height:37px"></div>
<div class="rbox" style="left:713.500px;top:207.500px;width:168px;height:37px"></div>
<div class="rbox" style="left:882.500px;top:207.500px;width:173px;height:37.500px"></div>
<div class="rbox" style="left:91px;top:460.800px;width:100px;height:27.200px"></div>
<div class="t red" style="left:569.500px;top:190.800px;font-size:11.500px">同单分摊的销售费用</div>
<div class="t red" style="left:735px;top:188.200px;font-size:11.600px">费用分摊单分摊的费用</div>
<div class="t red" style="left:841.500px;top:309.200px;font-size:11.600px">总费用<span style="margin:0 1.200px">=</span>销售费用分摊<span style="margin:0 1.200px">+</span>关联销售费用分摊</div>
<svg class="a" style="left:0;top:0;pointer-events:none" width="1080" height="545" viewBox="0 0 1080 545"><path d="M208.300 457.900L597.500 264.300" stroke="#e8202a" stroke-width="2.900" stroke-linecap="round" fill="none"/><path d="M606.400 260L594 260.200 597 264 598.500 269.700z" fill="#e8202a"/><path d="M944 252.800L939.600 288" stroke="#e8202a" stroke-width="2.500" stroke-linecap="round" fill="none"/><path d="M938.800 298L934.600 285 939.700 287.200 944.600 286z" fill="#e8202a"/></svg>

</body>
</html>
